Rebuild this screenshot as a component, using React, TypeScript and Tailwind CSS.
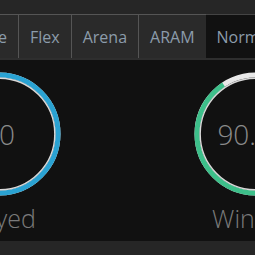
const tabs = ["Queue", "Flex", "Arena", "ARAM", "Normal"];

const Ring = ({ pct, color, value }: { pct: number; color: string; value: string }) => {
    const r = 59;
    const c = 2 * Math.PI * r;
    return (
        <div className="relative w-[124px] h-[124px]">
            <svg width="124" height="124" viewBox="0 0 124 124" className="-rotate-90">
                <circle cx="62" cy="62" r={r} fill="none" stroke="#e8e8e8" strokeWidth="5" />
                <circle
                    cx="62"
                    cy="62"
                    r={r}
                    fill="none"
                    stroke={color}
                    strokeWidth="5"
                    strokeDasharray={`${(c * pct) / 100} ${c}`}
                />
                <circle cx="62" cy="62" r="55.8" fill="none" stroke="#d8d8d8" strokeWidth="1.4" />
            </svg>
            <div className="absolute inset-0 flex items-center justify-center text-[28px] font-light text-[#8a8a8a]">
                {value}
            </div>
        </div>
    );
};

const App = () => {
    return (
        <div className="w-[255px] h-[255px] overflow-hidden bg-[#111111] flex flex-col font-['Open_Sans',sans-serif]">
            <div className="h-[14px] bg-[#262626] shrink-0" />
            <div className="flex shrink-0 h-[46px] border-b-2 border-[#2e2e2e] ml-[-55px]">
                {tabs.map((t) => (
                    <div
                        key={t}
                        className={
                            t === "Normal"
                                ? "flex items-center px-[11px] text-[16px] text-[#8c9cab] bg-[#111111] border-t border-[#444]"
                                : "flex items-center px-[11px] text-[16px] text-[#8c9cab] bg-[#2a2a2a] border border-r-0 border-[#555] border-b-0 last:border-r"
                        }
                    >
                        {t}
                    </div>
                ))}
            </div>
            <div className="flex-1 flex justify-between ml-[-63px] w-[381px] pt-[12px]">
                <div className="flex flex-col items-center w-[124px]">
                    <Ring pct={100} color="#2aa2d2" value="20" />
                    <div className="mt-[4px] text-[25px] font-light text-[#7a7a7a]">Played</div>
                </div>
                <div className="flex flex-col items-center w-[124px]">
                    <Ring pct={90.6} color="#3dbf8a" value="90.6%" />
                    <div className="mt-[4px] text-[25px] font-light text-[#7a7a7a] whitespace-nowrap">Winrate</div>
                </div>
            </div>
            <div className="h-[14px] bg-[#262626] shrink-0" />
        </div>
    );
};

export default App;
